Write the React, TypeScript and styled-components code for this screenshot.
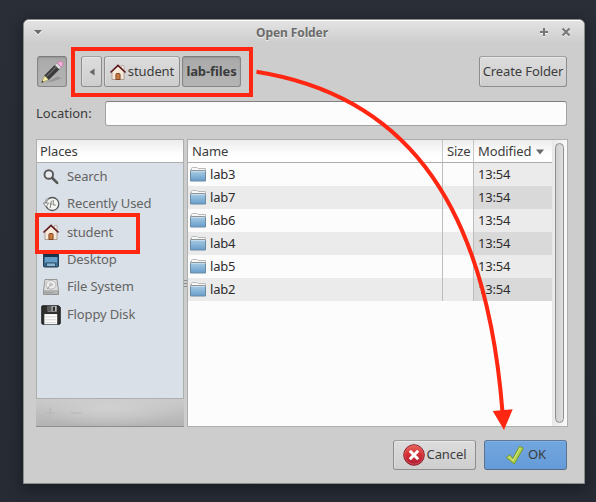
import React from "react";
import styled, { createGlobalStyle, css } from "styled-components";

const RED = "#ff2612";

const GlobalStyle = createGlobalStyle`
  * { box-sizing: border-box; }
  html, body { margin: 0; height: 100%; overflow: hidden; background: #2a2e37; }
  body { font-family: "Noto Sans", "Open Sans", sans-serif; font-size: 13px; color: #3c3c3c; }
`;

const Desktop = styled.main`
  position: relative;
  width: 596px;
  height: 502px;
  padding: 19px 11px 18px 23px;
  background: linear-gradient(#2a2e37, #272b34);
  overflow: hidden;
`;

const Window = styled.section`
  width: 562px;
  height: 465px;
  display: flex;
  flex-direction: column;
  background: #cdcdcd;
  border: 1px solid #8b8d8c;
  border-radius: 6px 6px 0 0;
  box-shadow: 0 4px 14px rgba(10, 14, 18, 0.55);
`;

const TitleBar = styled.header`
  height: 23px;
  flex: none;
  display: flex;
  align-items: center;
  padding: 0 13px 0 9px;
  border-top: 1px solid #fff;
  border-radius: 5px 5px 0 0;
  background: linear-gradient(#e3e3e3, #cdcdcd);
`;

const Title = styled.h1`
  flex: 1;
  margin: 0;
  padding: 1px 0 0 2px;
  text-align: center;
  font-size: 12px;
  line-height: 18px;
  font-weight: 700;
  letter-spacing: -0.1px;
  color: #6c6c6c;
  text-shadow: 0 1px 0 #eee;
`;

const TitleControls = styled.div`
  display: flex;
  gap: 12px;
`;

const Content = styled.div`
  flex: 1;
  display: flex;
  flex-direction: column;
  padding: 13px 16px 13px 12px;
`;

const Toolbar = styled.nav`
  height: 31px;
  display: flex;
  margin: 0 1px;
`;

const PathBar = styled.div`
  display: flex;
  gap: 2px;
  margin-left: 14px;
  flex: 1;
`;

const pressed = css`
  background: linear-gradient(#a9a9a9, #b5b5b5);
  border-color: #7c7c7c #868686 #868686;
  box-shadow: inset 0 1px 2px rgba(0, 0, 0, 0.12);
`;

const primary = css`
  background: linear-gradient(#72a6df, #649bd8);
  border-color: #5f7895 #5b7390 #536b88;
  box-shadow: inset 0 1px 0 #80b0e5;
`;

const Button = styled.button<{ $width: number; $height?: number; $pressed?: boolean; $primary?: boolean; $gap?: number }>`
  width: ${(p) => p.$width}px;
  height: ${(p) => p.$height ?? 31}px;
  flex: none;
  display: flex;
  align-items: center;
  justify-content: center;
  gap: ${(p) => p.$gap ?? 2}px;
  padding: 0;
  white-space: nowrap;
  font: inherit;
  font-weight: ${(p) => (p.$pressed ? 700 : 400)};
  letter-spacing: -0.1px;
  color: #3c3c3c;
  border: 1px solid #8d8d8d;
  border-top-color: #a0a0a0;
  border-radius: 3px;
  background: linear-gradient(#dcdcdc, #cecece);
  box-shadow: inset 0 1px 0 #e9e9e9, inset 1px 0 0 #dedede;
  ${(p) => p.$pressed && pressed}
  ${(p) => p.$primary && primary}

  svg { flex: none; }
`;

const ButtonText = styled.span`
  padding-bottom: 2px;
`;

const LocationRow = styled.label`
  height: 25px;
  display: flex;
  align-items: center;
  margin: 14px 1px 13px 0;
`;

const LocationLabel = styled.span`
  width: 69px;
  padding-bottom: 2px;
`;

const LocationInput = styled.input`
  flex: 1;
  height: 25px;
  border: 1px solid #a3a3a3;
  border-top-color: #7f7f7f;
  border-radius: 3px;
  background: #fcfcfc;
  outline: 0;
`;

const Panes = styled.div`
  height: 288px;
  display: flex;
`;

const Sidebar = styled.aside`
  width: 148px;
  display: flex;
  flex-direction: column;
`;

const Places = styled.div`
  height: 260px;
  border: 1px solid #adafaf;
  background: #dae0e7;
`;

const HeaderCell = styled.div<{ $width?: number; $indent: number; $last?: boolean }>`
  width: ${(p) => (p.$width ? `${p.$width}px` : "auto")};
  flex: ${(p) => (p.$width ? "none" : 1)};
  height: 23px;
  display: flex;
  align-items: center;
  padding-left: ${(p) => p.$indent}px;
  letter-spacing: -0.1px;
  border-bottom: 1px solid #adadad;
  border-right: ${(p) => (p.$last ? "0" : "1px solid #c6c6c6")};
  background: linear-gradient(#ececec, #fdfdfd 60%, #fff);
`;

const PlaceRow = styled.div<{ $height: number }>`
  height: ${(p) => p.$height}px;
  display: flex;
  align-items: center;
  gap: 5px;
  padding-left: 4px;
  letter-spacing: -0.14px;
  color: #646464;
`;

const PlaceLabel = styled.span<{ $lift: number }>`
  padding-bottom: ${(p) => p.$lift}px;
`;

const IconSlot = styled.span`
  width: 20px;
  margin-right: 1px;
  display: flex;
  justify-content: center;
`;

const SidebarTools = styled.div`
  height: 28px;
  display: flex;
  align-items: center;
  gap: 16px;
  padding-left: 9px;
  border-bottom: 1px solid #8e8e8e;
  background: radial-gradient(ellipse at 50% 30%, #cfcfcf 10%, rgba(205, 205, 205, 0) 75%), linear-gradient(#cacaca, #b3b3b3);
`;

const Splitter = styled.div`
  width: 3px;
  display: flex;
  flex-direction: column;
  justify-content: center;
  gap: 2px;
`;

const Grip = styled.i`
  height: 1px;
  background: #8c8c8c;
`;

const FilePane = styled.div`
  width: 381px;
  display: flex;
  border: 1px solid #adafaf;
  background: #fcfcfc;
`;

const Table = styled.div`
  flex: 1;
`;

const HeaderRow = styled.div`
  display: flex;
`;

const FileRow = styled.div<{ $alt: boolean }>`
  height: 23px;
  display: flex;
  color: #2c2c2c;
  background: ${(p) => (p.$alt ? "#ebebeb" : "#fcfcfc")};
`;

const NameCell = styled.div`
  flex: 1;
  display: flex;
  align-items: flex-start;
  gap: 4px;
  padding: 4px 0 0 2px;
  line-height: 15px;
  letter-spacing: -0.2px;
  border-right: 1px solid #bdbdbd;
`;

const SizeCell = styled.div`
  width: 31px;
  border-right: 1px solid #bdbdbd;
`;

const ModifiedCell = styled.div<{ $alt: boolean }>`
  width: 78px;
  padding: 0 0 0 4px;
  line-height: 23px;
  letter-spacing: -0.2px;
  background: ${(p) => (p.$alt ? "#d9d9d9" : "#ebebeb")};
`;

const SortArrow = styled.svg`
  margin: 2px 0 0 5px;
`;

const ScrollTrack = styled.div`
  width: 15px;
  padding: 3px 2px 3px 3px;
  background: linear-gradient(90deg, #e8e8e8, #fafafa);
`;

const ScrollThumb = styled.div`
  width: 9px;
  height: 280px;
  border: 1px solid #8e8e8e;
  border-radius: 5px;
  background: linear-gradient(90deg, #d0d0d0, #dedede);
`;

const Actions = styled.footer`
  display: flex;
  justify-content: flex-end;
  gap: 8px;
  margin: 13px 1px 0 0;
`;

const Annotations = styled.svg`
  position: absolute;
  inset: 0;
  pointer-events: none;
`;

const HouseIcon = () => (
  <svg width="16" height="16" viewBox="0 0 16 16">
    <path d="M11.500 1.500h2.500v5h-2.500z" fill="#f7efe6" stroke="#b39c8c" strokeWidth=".7" />
    <path d="M2 7.500 8 2l6 5.500v8H2z" fill="#f6e9da" stroke="#a08d80" strokeWidth=".8" />
    <path d="M5.900 15.500v-5q0-1 1-1h2.200q1 0 1 1v5z" fill="#c97b3e" stroke="#7d4322" strokeWidth=".9" />
    <path d="M1 8 8 1.500 15 8" fill="none" stroke="#5f1c20" strokeWidth="1.700" strokeLinecap="round" />
  </svg>
);

const PencilIcon = () => (
  <svg width="24" height="24" viewBox="0 0 24 24">
    <path d="M5 22.500q9-.5 17-4.500l-5-1.500-9 5z" fill="#858585" opacity=".6" />
    <g transform="translate(1.500 22.800) rotate(-45)">
      <path d="M0 0 8-2.900V2.900z" fill="#f5eda5" stroke="#a19755" strokeWidth=".6" />
      <path d="M0 0 2.200-.9V.9z" fill="#222" />
      <path d="M7.500-2.900H22V2.900H7.500z" fill="#3b3b3b" stroke="#262626" strokeWidth=".6" />
      <path d="M8-.8h14" stroke="#707070" strokeWidth="1.200" />
      <path d="M22-2.900h3V2.900h-3z" fill="#dcdcdc" stroke="#8a8a8a" strokeWidth=".5" />
      <path d="M25-2.900h2q2.600 0 2.600 2.900T27 2.900h-2z" fill="#f0b0d6" stroke="#b0709a" strokeWidth=".7" />
    </g>
  </svg>
);

const SearchIcon = () => (
  <svg width="16" height="16" viewBox="0 0 16 16">
    <circle cx="5.800" cy="5.500" r="4.300" fill="#e7eaee" stroke="#585858" strokeWidth="1.900" />
    <path d="m9.300 9 4.900 4.900" stroke="#555" strokeWidth="2.500" strokeLinecap="round" />
  </svg>
);

const RecentIcon = () => (
  <svg width="17" height="16" viewBox="0 0 17 16">
    <circle cx="9.300" cy="8" r="6.500" fill="#f3f3f0" stroke="#555" strokeWidth="1.300" />
    <path d="M5 2.500A6.500 6.500 0 0 0 3 10" fill="none" stroke="#aaa" strokeWidth="2" />
    <path d="M.4 7h5.200L3 11z" fill="#f5f5f5" stroke="#777" strokeWidth=".8" />
    <path d="M10.300 4v5h2.500M7.200 12l.8-6q.2-1 1.300-1M6.800 8h2.400" fill="none" stroke="#777" strokeWidth=".9" />
  </svg>
);

const DesktopIcon = () => (
  <svg width="16" height="16" viewBox="0 0 16 16">
    <rect x=".5" y=".5" width="15" height="14.500" rx="1" fill="#3e6c91" stroke="#223d52" />
    <path d="M1 1h14v4H1z" fill="#183247" />
    <path d="M2 5h12v5.500H2z" fill="#669dc7" />
    <path d="M3.500 11h9v3.500h-9z" fill="#8eb6d2" stroke="#24435a" strokeWidth=".8" />
  </svg>
);

const DriveIcon = () => (
  <svg width="16" height="16" viewBox="0 0 16 16">
    <path d="M2 .5h12l1.500 11v4H.5v-4z" fill="#dedede" stroke="#8c8c8c" strokeWidth=".9" />
    <ellipse cx="8" cy="5.800" rx="5" ry="4.300" fill="#ededed" stroke="#aaa" strokeWidth=".8" />
    <ellipse cx="8" cy="5.500" rx="1.600" ry="1.300" fill="#ccc" stroke="#aaa" strokeWidth=".6" />
    <path d="M.8 11.800h14.400v3.500H.8z" fill="#b8b8b8" stroke="#8c8c8c" strokeWidth=".6" />
    <path d="M2.500 13.600h7" stroke="#868686" strokeDasharray="1 1" />
    <path d="m4 10.200 3.500-4" stroke="#999" strokeWidth=".9" />
  </svg>
);

const FloppyIcon = () => (
  <svg width="20" height="20" viewBox="0 0 21 21">
    <path d="M1.500.8h17l1.700 1.700v16.700q0 1-1 1H2q-1.200 0-1.200-1V1.500q0-.7.7-.7z" fill="#303030" stroke="#171717" />
    <path d="M7 1h9.500v6H7z" fill="#b8b8b8" />
    <path d="M7 1h4v5.500H7z" fill="#5a5a5a" />
    <path d="M12.300 1.800h2.400v4.400h-2.400z" fill="#303030" />
    <path d="M3.500 9.500h13.500v10.700H3.500z" fill="#fcfcfc" />
    <path d="M4.500 12.500h11.500M4.500 15.500h11.500M4.500 18.500h11.500" stroke="#d1d1d1" />
  </svg>
);

const FolderIcon = () => (
  <svg width="16" height="15" viewBox="0 0 16 15">
    <path d="M.5 13V2.500h1v-1q0-1 1-1h4.500l1 1h7.500V13z" fill="#f8f8f8" stroke="#b9b9b9" />
    <path d="M1 3.500h14" stroke="#8f9699" />
    <path d="M.5 4.500h15v9.500H.5z" fill="url(#folderFront)" stroke="#6b8ba3" />
    <path d="M1 4.500h14" stroke="#c4dced" />
  </svg>
);

const CancelIcon = () => (
  <svg width="22" height="22" viewBox="0 0 22 22">
    <circle cx="11" cy="11" r="10.300" fill="url(#cancelFace)" stroke="#8e2330" />
    <circle cx="11" cy="11" r="9.200" fill="none" stroke="#ec6c62" strokeWidth=".7" opacity=".75" />
    <path d="m6.800 6.800 8.400 8.400m0-8.400-8.400 8.400" stroke="#fff" strokeWidth="3" />
  </svg>
);

const CheckIcon = () => (
  <svg width="20" height="20" viewBox="0 0 20 20">
    <path d="m1.300 12.500 3.500-2.600 3 3.500L14.500 1.200l3.800 2L9.200 19z" fill="#b5d14f" stroke="#6f9a30" strokeWidth="1" strokeLinejoin="round" />
    <path d="m3 12.600 1.600-1.100 3.400 4L15 2.800" fill="none" stroke="#d2e47a" strokeWidth="1" />
  </svg>
);

const places = [
  { label: "Search", icon: <SearchIcon />, height: 27, lift: 2 },
  { label: "Recently Used", icon: <RecentIcon />, height: 27, lift: 2 },
  { label: "student", icon: <HouseIcon />, height: 29, lift: 0 },
  { label: "Desktop", icon: <DesktopIcon />, height: 27, lift: 2 },
  { label: "File System", icon: <DriveIcon />, height: 27, lift: 2 },
  { label: "Floppy Disk", icon: <FloppyIcon />, height: 30, lift: 2 },
];

const files = ["lab3", "lab7", "lab6", "lab4", "lab5", "lab2"];

export default function App() {
  return (
    <Desktop>
      <GlobalStyle />
      <Window>
        <TitleBar>
          <svg width="10" height="8" viewBox="0 0 10 8">
            <path d="M1 3h8L5 7.500z" fill="#fff" />
            <path d="M1 2h8L5 6.500z" fill="#6c6c6c" />
          </svg>
          <Title>Open Folder</Title>
          <TitleControls>
            <svg width="10" height="10" viewBox="0 0 10 10">
              <path d="M1 6h8M5 2v8" stroke="#eee" strokeWidth="2" />
              <path d="M1 5h8M5 1v8" stroke="#777" strokeWidth="2" />
            </svg>
            <svg width="10" height="10" viewBox="0 0 10 10">
              <path d="m1.500 2.500 7 7m0-7-7 7" stroke="#eee" strokeWidth="2" />
              <path d="m1.500 1.500 7 7m0-7-7 7" stroke="#777" strokeWidth="2" />
            </svg>
          </TitleControls>
        </TitleBar>
        <Content>
          <Toolbar>
            <Button $width={30} $pressed aria-label="Edit location"><PencilIcon /></Button>
            <PathBar>
              <Button $width={21} aria-label="Back">
                <svg width="6" height="8" viewBox="0 0 6 8"><path d="M5.500.5v7L.5 4z" fill="#666" /></svg>
              </Button>
              <Button $width={76} $gap={2}><HouseIcon /><ButtonText>student</ButtonText></Button>
              <Button $width={59} $pressed><ButtonText>lab-files</ButtonText></Button>
            </PathBar>
            <Button $width={88}><ButtonText>Create Folder</ButtonText></Button>
          </Toolbar>
          <LocationRow>
            <LocationLabel>Location:</LocationLabel>
            <LocationInput />
          </LocationRow>
          <Panes>
            <Sidebar>
              <Places>
                <HeaderCell $indent={3} $last>Places</HeaderCell>
                {places.map((p) => (
                  <PlaceRow key={p.label} $height={p.height}>
                    <IconSlot>{p.icon}</IconSlot>
                    <PlaceLabel $lift={p.lift}>{p.label}</PlaceLabel>
                  </PlaceRow>
                ))}
              </Places>
              <SidebarTools>
                <svg width="10" height="10"><path d="M0 5h10M5 0v10" stroke="#bbb" strokeWidth="2" /></svg>
                <svg width="10" height="10"><path d="M0 5h10" stroke="#bebebe" strokeWidth="2" /></svg>
              </SidebarTools>
            </Sidebar>
            <Splitter><Grip /><Grip /><Grip /></Splitter>
            <FilePane>
              <Table>
                <HeaderRow>
                  <HeaderCell $indent={4}>Name</HeaderCell>
                  <HeaderCell $width={31} $indent={4}>Size</HeaderCell>
                  <HeaderCell $width={78} $indent={4} $last>
                    Modified
                    <SortArrow width="8" height="6" viewBox="0 0 8 6"><path d="M0 .5h8L4 5.500z" fill="#6a6a6a" /></SortArrow>
                  </HeaderCell>
                </HeaderRow>
                {files.map((name, i) => (
                  <FileRow key={name} $alt={i % 2 === 1}>
                    <NameCell><FolderIcon />{name}</NameCell>
                    <SizeCell />
                    <ModifiedCell $alt={i % 2 === 1}>13:54</ModifiedCell>
                  </FileRow>
                ))}
              </Table>
              <ScrollTrack><ScrollThumb /></ScrollTrack>
            </FilePane>
          </Panes>
          <Actions>
            <Button $width={83} $height={30}><CancelIcon /><ButtonText>Cancel</ButtonText></Button>
            <Button $width={83} $height={30} $primary $gap={3}><CheckIcon /><ButtonText>OK</ButtonText></Button>
          </Actions>
        </Content>
      </Window>
      <Annotations width="596" height="502" viewBox="0 0 596 502">
        <defs>
          <linearGradient id="folderFront" x2="0" y2="1"><stop stopColor="#a5c9e2" /><stop offset="1" stopColor="#669dcb" /></linearGradient>
          <linearGradient id="cancelFace" x2="0" y2="1"><stop stopColor="#e8695b" /><stop offset=".5" stopColor="#d22b32" /><stop offset="1" stopColor="#a8203a" /></linearGradient>
        </defs>
        <g fill="none" stroke={RED} strokeWidth="4">
          <rect x="73" y="49" width="178" height="46" />
          <rect x="37" y="215" width="101" height="37" />
          <path d="M256.500 71.700C396 94 485 190 502.500 412" />
        </g>
        <path d="m492.700 411 20-1.700L504 430z" fill={RED} />
      </Annotations>
    </Desktop>
  );
}
